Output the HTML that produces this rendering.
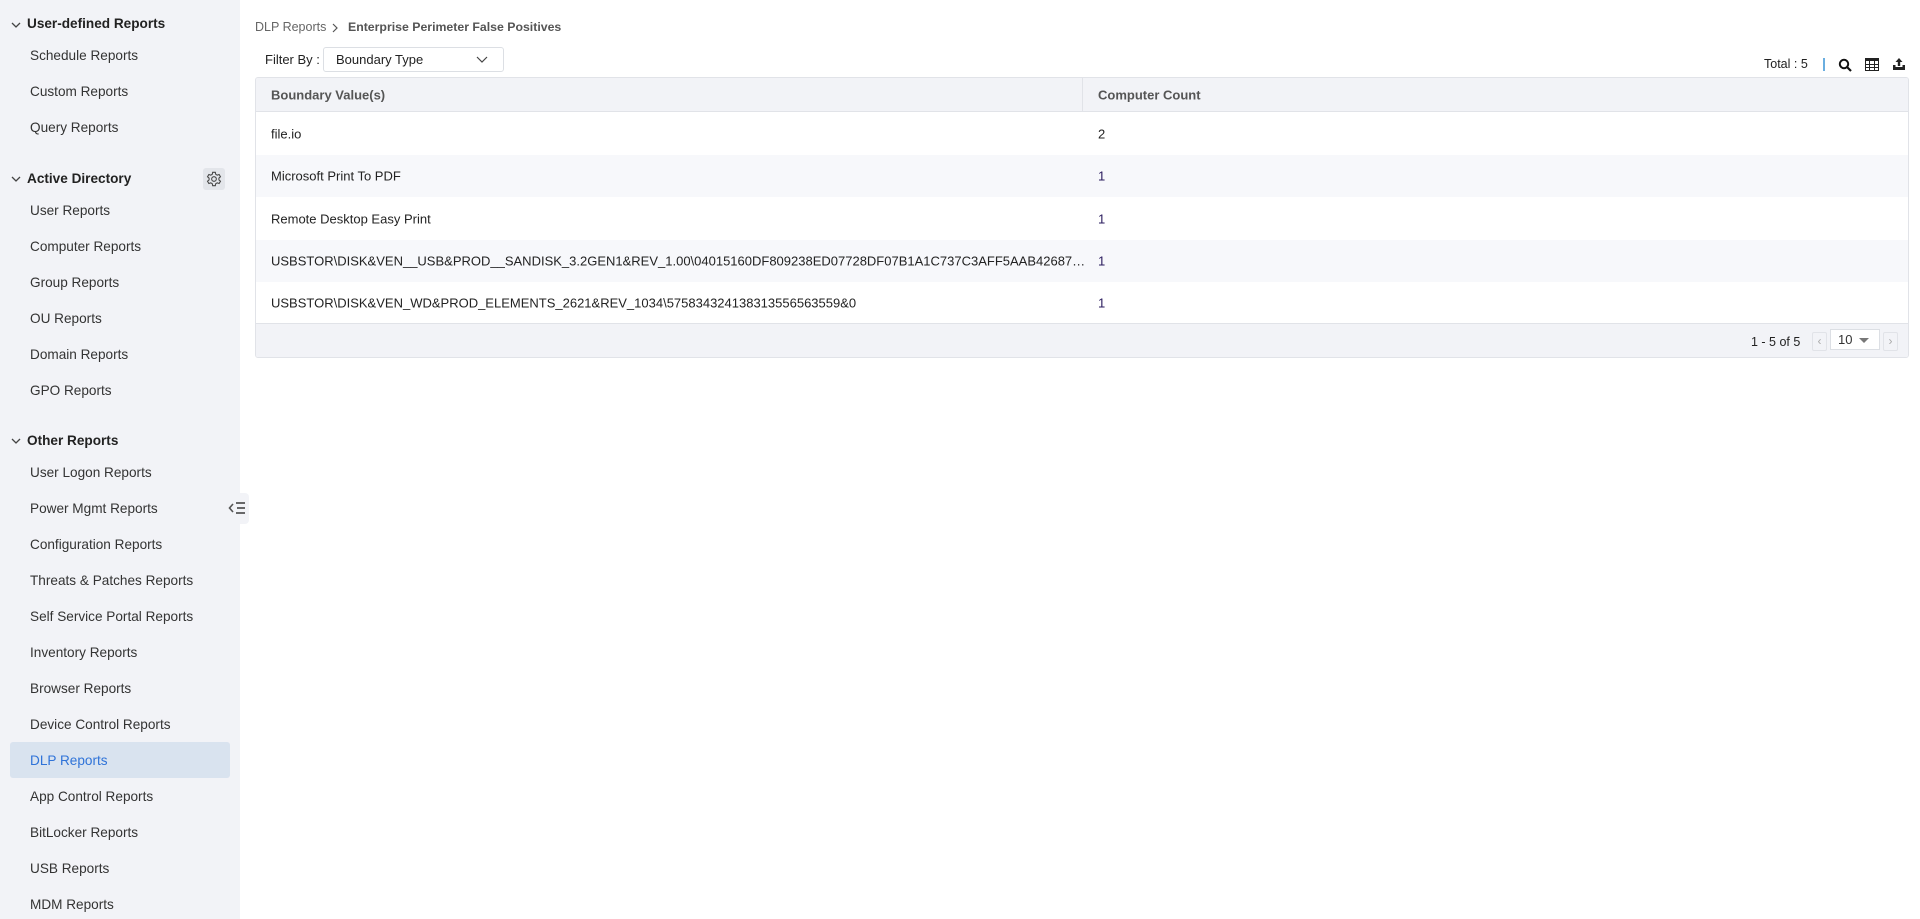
<!DOCTYPE html>
<html><head><meta charset="utf-8">
<style>
*{margin:0;padding:0;box-sizing:border-box}
body{width:1920px;height:919px;overflow:hidden;background:#fff;font-family:"Liberation Sans",sans-serif;color:#333;position:relative}
#side{position:absolute;left:0;top:0;width:240px;height:919px;background:#f2f3f7}
.it{position:absolute;left:30px;font-size:13.6px;color:#333;line-height:20px}
.hd{position:absolute;left:27px;font-size:13.6px;font-weight:bold;color:#222;line-height:20px}
.chev{position:absolute;left:10px;width:12px;height:12px}
.sel{position:absolute;left:10px;top:742px;width:220px;height:36px;background:#d9e3ef;border-radius:3px}
.tab{position:absolute;left:226px;top:493px;width:23px;height:31px;background:#f2f3f7;border-radius:0 4px 4px 0}
#tbl{position:absolute;left:255px;top:77px;width:1654px;height:281px;border:1px solid #e1e3e8;border-radius:3px;overflow:hidden}
.row{position:absolute;left:0;width:100%;font-size:13px;color:#222}
.row span{position:absolute;top:50%;transform:translateY(-50%)}
.c1{left:15px}.c2{left:842px}
</style></head><body>
<div id="side">
<svg class="chev" style="top:19px" viewBox="0 0 12 12"><path d="M2 4l4 4 4-4" fill="none" stroke="#444" stroke-width="1.3"/></svg>
<div class="hd" style="top:14px">User-defined Reports</div>
<div class="it" style="top:46px">Schedule Reports</div>
<div class="it" style="top:82px">Custom Reports</div>
<div class="it" style="top:118px">Query Reports</div>
<svg class="chev" style="top:173px" viewBox="0 0 12 12"><path d="M2 4l4 4 4-4" fill="none" stroke="#444" stroke-width="1.3"/></svg>
<div class="hd" style="top:169px">Active Directory</div>
<div style="position:absolute;left:203px;top:168px;width:22px;height:22px;background:#e3e5ea;border-radius:3px"></div>
<svg style="position:absolute;left:206px;top:171px" width="16" height="16" viewBox="0 0 24 24"><path d="M10 2h4l.6 3 2.2 1.2 2.9-1 2 3.4-2.3 2v2.8l2.3 2-2 3.4-2.9-1-2.2 1.2-.6 3h-4l-.6-3-2.2-1.2-2.9 1-2-3.4 2.3-2v-2.8l-2.3-2 2-3.4 2.9 1 2.2-1.2z" fill="none" stroke="#444" stroke-width="1.6"/><circle cx="12" cy="12" r="3.5" fill="none" stroke="#444" stroke-width="1.6"/></svg>
<div class="it" style="top:201px">User Reports</div>
<div class="it" style="top:237px">Computer Reports</div>
<div class="it" style="top:273px">Group Reports</div>
<div class="it" style="top:309px">OU Reports</div>
<div class="it" style="top:345px">Domain Reports</div>
<div class="it" style="top:381px">GPO Reports</div>
<svg class="chev" style="top:435px" viewBox="0 0 12 12"><path d="M2 4l4 4 4-4" fill="none" stroke="#444" stroke-width="1.3"/></svg>
<div class="hd" style="top:431px">Other Reports</div>
<div class="sel"></div>
<div class="it" style="top:463px">User Logon Reports</div>
<div class="it" style="top:499px">Power Mgmt Reports</div>
<div class="it" style="top:535px">Configuration Reports</div>
<div class="it" style="top:571px">Threats &amp; Patches Reports</div>
<div class="it" style="top:607px">Self Service Portal Reports</div>
<div class="it" style="top:643px">Inventory Reports</div>
<div class="it" style="top:679px">Browser Reports</div>
<div class="it" style="top:715px">Device Control Reports</div>
<div class="it" style="top:751px;color:#2f73d8">DLP Reports</div>
<div class="it" style="top:787px">App Control Reports</div>
<div class="it" style="top:823px">BitLocker Reports</div>
<div class="it" style="top:859px">USB Reports</div>
<div class="it" style="top:895px">MDM Reports</div>
</div>
<div class="tab"></div>
<svg style="position:absolute;left:228px;top:501px" width="18" height="14" viewBox="0 0 18 14"><path d="M5 3L1.5 7 5 11" fill="none" stroke="#555" stroke-width="1.6"/><path d="M8 2h9M9 7h8M8 12h9" stroke="#555" stroke-width="1.8"/></svg>

<div style="position:absolute;left:255px;top:20px;font-size:12.5px;color:#666">DLP Reports</div>
<svg style="position:absolute;left:331px;top:23px" width="8" height="10" viewBox="0 0 8 10"><path d="M2 1l4 4-4 4" fill="none" stroke="#555" stroke-width="1.2"/></svg>
<div style="position:absolute;left:348px;top:20px;font-size:12.3px;font-weight:bold;color:#555">Enterprise Perimeter False Positives</div>

<div style="position:absolute;left:265px;top:52px;font-size:13px;color:#222">Filter By :</div>
<div style="position:absolute;left:323px;top:47px;width:181px;height:25px;border:1px solid #dcdfe4;border-radius:3px;background:#fff"></div>
<div style="position:absolute;left:336px;top:52px;font-size:13px;color:#222">Boundary Type</div>
<svg style="position:absolute;left:476px;top:54px" width="12" height="10" viewBox="0 0 12 10"><path d="M1 3l5 5 5-5" fill="none" stroke="#444" stroke-width="1.2"/></svg>

<div style="position:absolute;left:1764px;top:57px;font-size:12.5px;color:#222">Total : 5</div>
<div style="position:absolute;left:1823px;top:58px;width:2px;height:13px;background:#6aaee0"></div>
<svg style="position:absolute;left:1838px;top:58px" width="14" height="14" viewBox="0 0 14 14"><circle cx="6" cy="6" r="4.2" fill="none" stroke="#111" stroke-width="2"/><path d="M9 9l4 4" stroke="#111" stroke-width="2.2"/></svg>
<svg style="position:absolute;left:1865px;top:58px" width="14" height="13" viewBox="0 0 14 13"><rect x="0.5" y="0.5" width="13" height="12" fill="none" stroke="#222"/><rect x="0" y="0" width="14" height="3" fill="#222"/><path d="M0 6.5h14M0 9.5h14M4.5 3v10M9.5 3v10" stroke="#222"/></svg>
<svg style="position:absolute;left:1892px;top:57px" width="14" height="14" viewBox="0 0 14 14"><path d="M7 1L3.5 5h2.3v4h2.4V5h2.3z" fill="#222"/><path d="M1 8v5h12V8h-2.5v2h-7V8z" fill="#222"/></svg>

<div id="tbl">
<div class="row" style="top:0;height:34px;background:#f2f3f7;border-bottom:1px solid #e1e3e8;font-weight:bold;color:#555"><span class="c1">Boundary Value(s)</span><span class="c2">Computer Count</span></div>
<div style="position:absolute;left:826px;top:0;width:1px;height:34px;background:#e1e3e8"></div>
<div class="row" style="top:35px;height:42px"><span class="c1">file.io</span><span class="c2">2</span></div>
<div class="row" style="top:77px;height:42px;background:#f7f8fb"><span class="c1">Microsoft Print To PDF</span><span class="c2" style="color:#2a1b5e">1</span></div>
<div class="row" style="top:119px;height:43px"><span class="c1">Remote Desktop Easy Print</span><span class="c2" style="color:#2a1b5e">1</span></div>
<div class="row" style="top:162px;height:42px;background:#f7f8fb"><span class="c1" style="width:815px;white-space:nowrap;overflow:hidden;text-overflow:ellipsis">USBSTOR\DISK&amp;VEN__USB&amp;PROD__SANDISK_3.2GEN1&amp;REV_1.00\04015160DF809238ED07728DF07B1A1C737C3AFF5AAB42687E0B9D</span><span class="c2" style="color:#2a1b5e">1</span></div>
<div class="row" style="top:204px;height:41px"><span class="c1">USBSTOR\DISK&amp;VEN_WD&amp;PROD_ELEMENTS_2621&amp;REV_1034\575834324138313556563559&amp;0</span><span class="c2" style="color:#2a1b5e">1</span></div>
<div class="row" style="top:245px;height:36px;background:#f2f3f7;border-top:1px solid #e1e3e8">
<span style="left:1495px;font-size:12.5px">1 - 5 of 5</span>
</div>
<div style="position:absolute;left:1556px;top:254px;width:15px;height:19px;border:1px solid #e1e3e8;border-radius:2px;background:#f2f3f7;color:#aaa;font-size:12px;text-align:center;line-height:17px">&lsaquo;</div>
<div style="position:absolute;left:1574px;top:251px;width:50px;height:21px;border:1px solid #dcdfe4;background:#fff;font-size:13px;line-height:19px;padding-left:7px">10</div>
<div style="position:absolute;left:1603px;top:260px;width:0;height:0;border-left:5px solid transparent;border-right:5px solid transparent;border-top:5px solid #777"></div>
<div style="position:absolute;left:1627px;top:254px;width:15px;height:19px;border:1px solid #e1e3e8;border-radius:2px;background:#f2f3f7;color:#aaa;font-size:12px;text-align:center;line-height:17px">&rsaquo;</div>
</div>
</body></html>
